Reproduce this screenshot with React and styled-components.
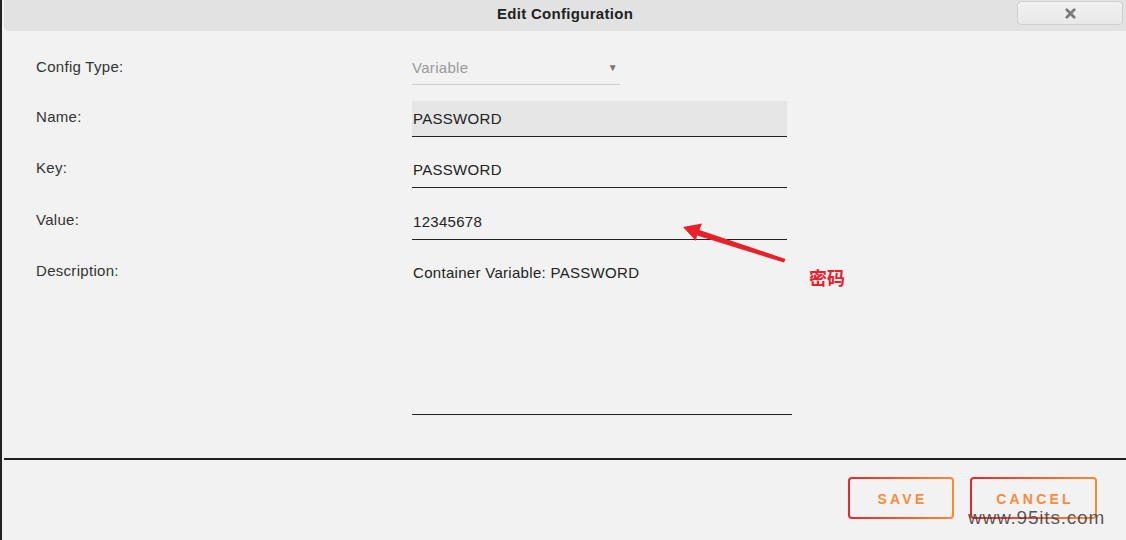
import React from 'react';
import styled, { createGlobalStyle } from 'styled-components';

const GlobalStyle = createGlobalStyle`
  html, body {
    margin: 0;
    padding: 0;
    background: #f2f2f2;
  }
  body {
    font-family: 'Liberation Sans', Arial, sans-serif;
    color: #333;
  }
`;

const Page = styled.div`
  position: relative;
  width: 1126px;
  height: 540px;
  box-sizing: border-box;
  border-left: 2px solid #222;
  padding-left: 2px;
  display: flex;
  flex-direction: column;
  overflow: hidden;
`;

const Header = styled.div`
  height: 31px;
  background: #e2e2e2;
  border-bottom-left-radius: 5px;
  display: grid;
  grid-template-columns: 1fr auto 1fr;
  align-items: start;
`;

const Title = styled.h1`
  grid-column: 2;
  margin: 0;
  line-height: 28px;
  font-size: 15px;
  font-weight: 700;
  letter-spacing: 0.3px;
  color: #222;
`;

const CloseButton = styled.button`
  grid-column: 3;
  justify-self: end;
  margin: 1px 3px 0 0;
  width: 106px;
  height: 24px;
  border: 1px solid #cfcfcf;
  border-radius: 4px;
  background: linear-gradient(#f1f1f1, #e9e9e9);
  display: flex;
  align-items: center;
  justify-content: center;
  padding: 0;
`;

const Form = styled.div`
  display: grid;
  grid-template-columns: 376px 1fr;
  padding: 20px 0 0 32px;
`;

const Label = styled.div`
  font-size: 15px;
  letter-spacing: 0.3px;
  color: #333;
  padding-top: 7px;
  margin-top: ${p => p.$gap || 0}px;
`;

const Select = styled.div`
  width: 208px;
  height: 34px;
  box-sizing: border-box;
  border-bottom: 1px solid #cdcdcd;
  display: flex;
  align-items: center;
  justify-content: space-between;
  padding-right: 2px;
  color: #9a9a9a;
  font-size: 15px;
  letter-spacing: 0.3px;
`;

const Arrow = styled.span`
  font-size: 10px;
  color: #777;
`;

const Field = styled.div`
  width: 375px;
  height: 36px;
  margin-top: ${p => p.$gap || 0}px;
  box-sizing: border-box;
  border-bottom: 1px solid #222;
  background: ${p => (p.$filled ? '#e6e6e6' : 'transparent')};
  display: flex;
  align-items: center;
  padding: 0 0 0 1px;
  font-size: 15px;
  letter-spacing: 0.3px;
  color: #222;
`;

const TextArea = styled.div`
  width: 380px;
  height: 160px;
  margin-top: ${p => p.$gap || 0}px;
  box-sizing: border-box;
  border-bottom: 1px solid #222;
  padding: 9px 0 0 1px;
  font-size: 15px;
  letter-spacing: 0.3px;
  color: #222;
`;

const Divider = styled.hr`
  margin: 43px 0 0 0;
  border: none;
  border-top: 2px solid #222;
`;

const Footer = styled.div`
  display: flex;
  justify-content: flex-end;
  gap: 16px;
  padding: 17px 29px 0 0;
`;

const ActionButton = styled.button`
  height: 42px;
  width: ${p => p.$w}px;
  border: 2px solid transparent;
  border-radius: 4px;
  background: linear-gradient(#f2f2f2, #f2f2f2) padding-box,
    linear-gradient(90deg, #e8262b, #ff8a30) border-box;
  color: #fb8a3c;
  font-family: 'Liberation Sans', Arial, sans-serif;
  font-weight: 700;
  font-size: 14px;
  letter-spacing: 3.2px;
  padding: 1px 0 0 3px;
`;

const Note = styled.span`
  position: absolute;
  left: 807px;
  top: 264px;
  font-family: 'Noto Sans CJK SC', sans-serif;
  font-weight: 700;
  font-size: 18px;
  color: #e8202a;
`;

const Watermark = styled.span`
  position: absolute;
  left: 966px;
  top: 507px;
  font-family: 'Liberation Sans', Arial, sans-serif;
  font-size: 19px;
  letter-spacing: 0.8px;
  color: rgba(60, 60, 60, 0.85);
`;

const Pointer = styled.svg`
  position: absolute;
  left: 0;
  top: 0;
  pointer-events: none;
`;

export default function App() {
  return (
    <>
      <GlobalStyle />
      <Page>
        <Header>
          <Title>Edit Configuration</Title>
          <CloseButton aria-label="close">
            <svg width="11" height="11" viewBox="0 0 12 12">
              <path d="M2 2 L10 10 M10 2 L2 10" stroke="#7a7a7a" strokeWidth="3" strokeLinecap="round" />
            </svg>
          </CloseButton>
        </Header>

        <Form>
          <Label>Config Type:</Label>
          <Select>
            <span>Variable</span>
            <Arrow>▼</Arrow>
          </Select>

          <Label $gap={16}>Name:</Label>
          <Field $gap={16} $filled>PASSWORD</Field>

          <Label $gap={15}>Key:</Label>
          <Field $gap={15}>PASSWORD</Field>

          <Label $gap={16}>Value:</Label>
          <Field $gap={16}>12345678</Field>

          <Label $gap={15}>Description:</Label>
          <TextArea $gap={15}>Container Variable: PASSWORD</TextArea>
        </Form>

        <Divider />

        <Footer>
          <ActionButton $w={106}>SAVE</ActionButton>
          <ActionButton $w={127}>CANCEL</ActionButton>
        </Footer>

        <Pointer width="1126" height="540">
          <polygon
            points="681,227 700,223.5 697.5,230 783.5,259 782,262.5 695,235.5 694,241"
            fill="#e8202a"
          />
        </Pointer>
        <Note>密码</Note>
        <Watermark>www.95its.com</Watermark>
      </Page>
    </>
  );
}
